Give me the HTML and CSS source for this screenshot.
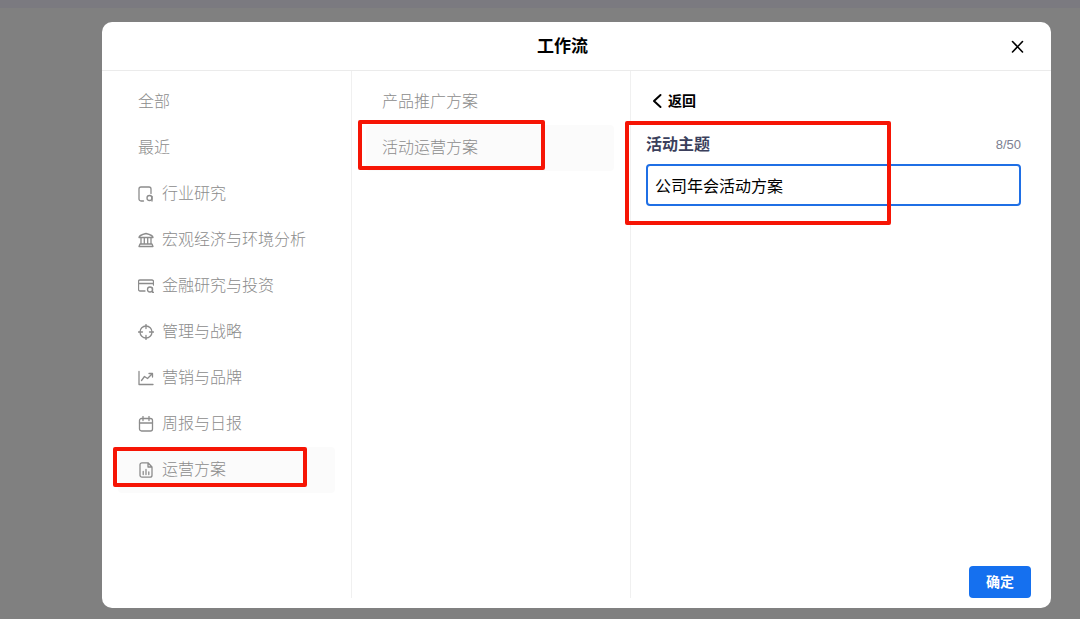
FILE: index.html
```html
<!DOCTYPE html>
<html lang="zh-CN">
<head>
    <meta charset="UTF-8">
    <meta name="viewport" content="width=device-width, initial-scale=1.0">
    <title>工作流</title>
    <link rel="stylesheet" href="styles.css">
</head>
<body>
    <div class="topbar"></div>
    <div class="overlay">
        <div class="modal" role="dialog" aria-labelledby="modalTitle">
            <header class="modal-header">
                <h1 id="modalTitle">工作流</h1>
                <button type="button" class="close" aria-label="关闭">
                    <svg viewBox="0 0 20 20"><path d="M5.500 4.500l10 10.500M15.500 4.500l-10 10.500"/></svg>
                </button>
            </header>

            <div class="modal-body">
                <nav class="column categories">
                    <button type="button" class="item">全部</button>
                    <button type="button" class="item">最近</button>
                    <button type="button" class="item">
                        <svg viewBox="0 0 16 16"><path d="M5.500 15H3a2 2 0 0 1-2-2V3a2 2 0 0 1 2-2h8a2 2 0 0 1 2 2v4.500"/><circle cx="11.500" cy="12" r="2.500"/><path d="M14 10.500V15"/></svg>
                        行业研究
                    </button>
                    <button type="button" class="item">
                        <svg viewBox="0 0 16 16"><path d="M1 5.500C1 3.500 4 2.500 8 1.500c4 1 7 2 7 4zM3 5.500V12M6.300 5.500V12M9.700 5.500V12M13 5.500V12M2 12h12l1 2.500H1z"/></svg>
                        宏观经济与环境分析
                    </button>
                    <button type="button" class="item">
                        <svg viewBox="0 0 16 16"><path d="M7 13H2a1.500 1.500 0 0 1-1.500-1.500v-8A1.500 1.500 0 0 1 2 2h12a1.500 1.500 0 0 1 1.500 1.500V7M.5 5.500h15"/><circle cx="12" cy="11.500" r="2.500"/><path d="M14.500 10v4.300h1"/></svg>
                        金融研究与投资
                    </button>
                    <button type="button" class="item">
                        <svg viewBox="0 0 16 16"><circle cx="8" cy="8" r="6"/><path d="M8 .5v4M8 11.500v4M.5 8h4M11.500 8h4"/></svg>
                        管理与战略
                    </button>
                    <button type="button" class="item">
                        <svg viewBox="0 0 16 16"><path d="M1 1.500v13h14M3.500 10.500l3-4 3 2 5-5M11 3.500h3.500V7"/></svg>
                        营销与品牌
                    </button>
                    <button type="button" class="item">
                        <svg viewBox="0 0 16 16"><rect x="1.500" y="2.500" width="13" height="12.500" rx="2"/><path d="M1.500 7h13M5 .5v4M11 .5v4"/></svg>
                        周报与日报
                    </button>
                    <button type="button" class="item active">
                        <svg viewBox="0 0 16 16"><path d="M4 .8h6L14 5v8.200a2 2 0 0 1-2 2H4a2 2 0 0 1-2-2V2.800a2 2 0 0 1 2-2zM10 .8V5h4M5.200 9.500v3M8 7.500v5M10.800 10v2.500"/></svg>
                        运营方案
                        <span class="mark mark-category"></span>
                    </button>
                </nav>

                <nav class="column templates">
                    <button type="button" class="item">产品推广方案</button>
                    <button type="button" class="item active">
                        活动运营方案
                        <span class="mark mark-template"></span>
                    </button>
                </nav>

                <form class="panel">
                    <button type="button" class="back">
                        <svg viewBox="0 0 10 16"><path d="M8.500 2L2 8l6.500 6"/></svg>
                        返回
                    </button>
                    <div class="field">
                        <div class="field-head">
                            <label for="topic">活动主题</label>
                            <span class="counter" id="counter">8/50</span>
                        </div>
                        <input type="text" id="topic" maxlength="50" value="公司年会活动方案" aria-describedby="counter">
                        <span class="mark mark-field"></span>
                    </div>
                    <button type="submit" class="confirm">确定</button>
                </form>
            </div>
        </div>
    </div>
</body>
</html>
```
FILE: styles.css
```css
* {
    margin: 0;
    padding: 0;
    box-sizing: border-box;
}

body {
    display: flex;
    flex-direction: column;
    min-height: 100vh;
    background: #808080;
    color: #000;
    font-family: "Liberation Sans", "Noto Sans CJK SC", sans-serif;
    font-size: 16px;
    line-height: 24px;
}

button,
input {
    font: inherit;
    border: none;
    background: none;
}

button {
    cursor: pointer;
}

svg {
    flex: none;
    fill: none;
    stroke: currentColor;
    stroke-linecap: round;
    stroke-linejoin: round;
}

.topbar {
    height: 8px;
    background: #7b7a80;
}

.overlay {
    flex: 1;
    display: flex;
    padding: 14px 29px 11px 102px;
}

.modal {
    flex: 1;
    display: flex;
    flex-direction: column;
    background: #fff;
    border-radius: 10px;
}

.modal-header {
    display: flex;
    align-items: center;
    gap: 8px;
    padding: 13px 24px 11px;
    border-bottom: 1px solid #ebebeb;
}

.modal-header h1 {
    flex: 1;
    text-align: center;
    font-size: 17px;
    font-weight: 700;
}

.close {
    display: flex;
}

.close svg {
    width: 20px;
    height: 20px;
    stroke-width: 1.6;
}

.modal-body {
    flex: 1;
    display: flex;
    padding-bottom: 10px;
}

.column {
    padding: 8px 16px;
    border-right: 1px solid #f0f0f0;
}

.categories {
    flex: 0 0 250px;
}

.templates {
    flex: 0 0 279px;
    padding-left: 14px;
}

.item {
    position: relative;
    display: flex;
    align-items: center;
    gap: 8px;
    width: 100%;
    height: 46px;
    padding: 0 16px;
    border-radius: 4px;
    color: #8c8c8c;
    font-weight: 300;
    text-align: left;
}

.categories .item {
    padding: 0 20px;
}

.item svg {
    width: 16px;
    height: 16px;
    stroke-width: 1.3;
}

.item.active {
    background: #fbfbfb;
}

.panel {
    flex: 1;
    display: flex;
    flex-direction: column;
    padding: 18px 20px 0 15px;
}

.back {
    display: flex;
    align-items: center;
    align-self: flex-start;
    gap: 6px;
    padding-left: 6px;
    font-size: 14px;
    font-weight: 700;
}

.back svg {
    width: 10px;
    height: 16px;
    stroke-width: 2;
}

.field {
    position: relative;
    margin: 20px 10px 20px 0;
}

.field-head {
    display: flex;
    justify-content: space-between;
    align-items: center;
    margin-bottom: 7px;
}

.field label {
    color: #3b3f5c;
    font-weight: 700;
}

.counter {
    color: #7d7f92;
    font-size: 13px;
}

.field input {
    width: 100%;
    height: 42px;
    padding: 0 7px;
    border: 2px solid #1f6fe5;
    border-radius: 4px;
    outline: none;
}

.confirm {
    align-self: flex-end;
    width: 62px;
    height: 32px;
    margin-top: auto;
    border-radius: 4px;
    background: #1570ef;
    color: #fff;
    font-size: 14px;
    font-weight: 700;
}

/* Red outlines over the steps to follow */
.mark {
    position: absolute;
    border: 4px solid #f61505;
    border-radius: 2px;
    pointer-events: none;
}

.mark-category {
    top: 0;
    left: -5px;
    width: 194px;
    height: 40px;
}

.mark-template {
    top: -5px;
    left: -8px;
    width: 187px;
    height: 50px;
}

.mark-field {
    top: -12px;
    left: -21px;
    width: 266px;
    height: 104px;
}
```
